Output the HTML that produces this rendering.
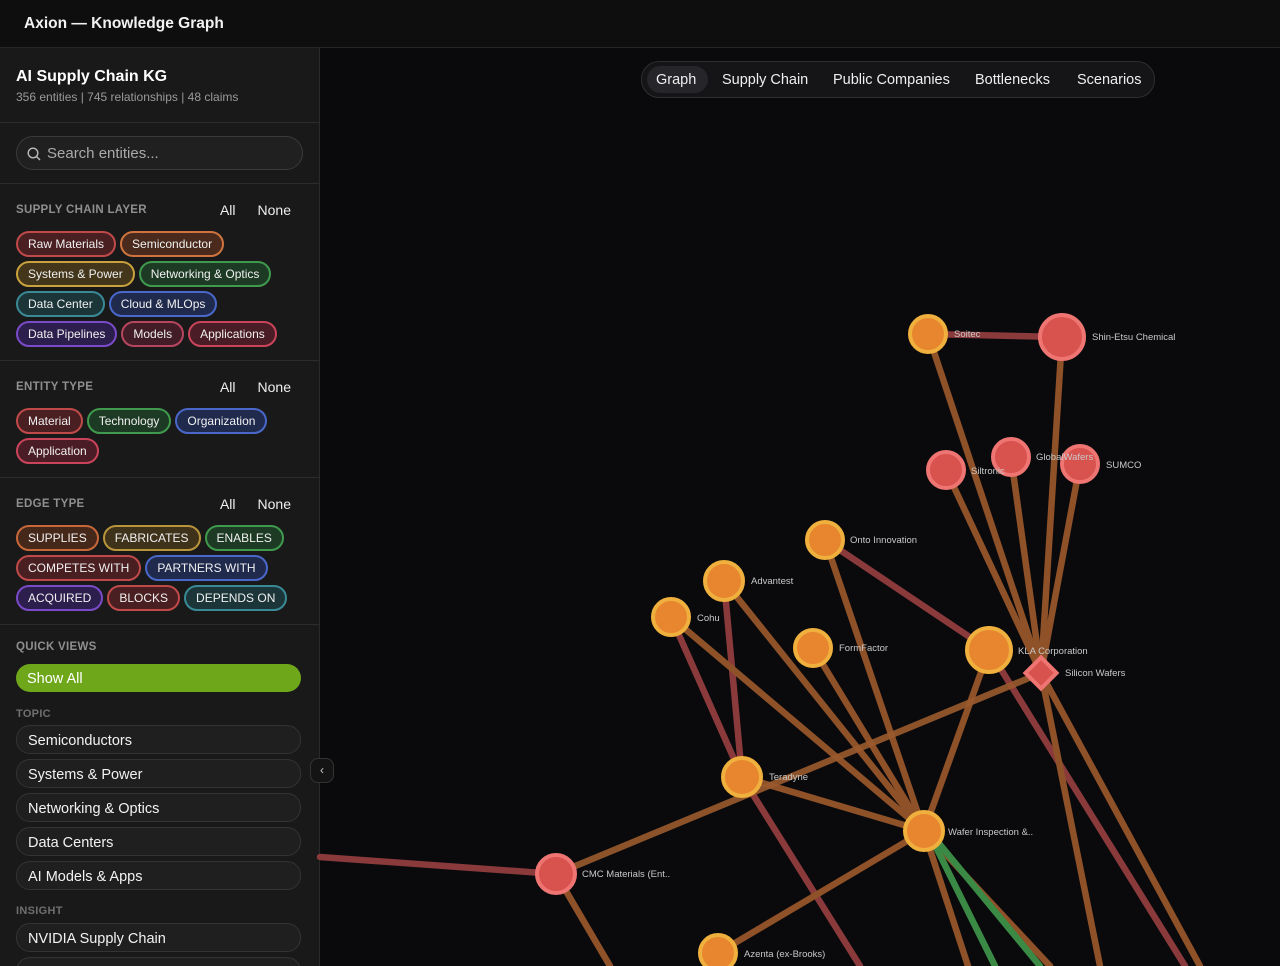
<!DOCTYPE html>
<html><head><meta charset="utf-8"><style>
*{box-sizing:border-box;margin:0;padding:0}
html,body{width:1280px;height:966px;overflow:hidden}
body{background:#0a0a0d;font-family:"Liberation Sans",sans-serif;color:#eee;position:relative}
.hdr{position:absolute;left:0;top:0;width:1280px;height:48px;background:#0e0e0e;border-bottom:1px solid #262626}
.hdr span{position:absolute;left:24px;top:15px;font-size:15.5px;font-weight:bold;color:#f2f2f2}
.side{position:absolute;left:0;top:48px;width:320px;height:918px;background:#191919;border-right:1px solid #2a2a2a;overflow:hidden}
.sec{border-bottom:1px solid #2c2c2c;padding:0 16px;position:relative}
.ttl{font-size:16px;font-weight:bold;color:#fff}
.sub{font-size:12px;color:#9a9a9a;margin-top:4px}
.lbl{font-size:11.5px;font-weight:bold;color:#8f8f8f;letter-spacing:.3px}
.an{position:absolute;right:28px;font-size:14px;color:#eee}
.an b{font-weight:normal;margin-left:22px}
.chips{margin-top:15px;display:flex;flex-wrap:wrap;gap:4px 4px;width:290px}
.c{display:inline-block;height:26px;line-height:22px;padding:0 10px;border-radius:13px;border:2px solid;font-size:12px;color:#f0f0f0}
.search{height:34px;border:1px solid #3a3a3a;border-radius:17px;background:#202020;font-size:15px;color:#aaa;padding:8px 0 0 30px;position:relative}
.btn{height:29px;border:1px solid #333;border-radius:14px;background:#1f1f1f;font-size:14.5px;color:#f2f2f2;padding:7px 0 0 11px;margin-bottom:5px}
.tabs{position:absolute;left:641px;top:61px;width:514px;height:37px;border:1px solid #2e2e2e;border-radius:18px;background:#151517;font-size:14.5px;color:#eee}
.tabs span{position:absolute;top:10px}
</style></head><body>
<div class="hdr"><span>Axion — Knowledge Graph</span></div>
<div class="side">
 <div class="sec" style="height:75px;padding-top:20px"><div class="ttl">AI Supply Chain KG</div><div class="sub">356 entities | 745 relationships | 48 claims</div></div>
 <div class="sec" style="height:61px;padding-top:13px"><div class="search"><svg style="position:absolute;left:10px;top:10px" width="14" height="14" viewBox="0 0 14 14"><circle cx="6" cy="6" r="4.8" fill="none" stroke="#bbb" stroke-width="1.4"/><path d="M9.5 9.5L13 13" stroke="#bbb" stroke-width="1.4"/></svg>Search entities...</div></div>
 <div class="sec" style="height:177px;padding-top:20px"><div class="lbl">SUPPLY CHAIN LAYER</div><div class="an" style="top:18px"><b>All</b><b>None</b></div>
  <div class="chips">
   <span class="c" style="border-color:#c04a4a;background:#4a1f22">Raw Materials</span><span class="c" style="border-color:#d0743f;background:#4a2a1c">Semiconductor</span>
   <span class="c" style="border-color:#c9a23d;background:#43361b">Systems &amp; Power</span><span class="c" style="border-color:#3f9a4e;background:#1d3a24">Networking &amp; Optics</span>
   <span class="c" style="border-color:#3a8a96;background:#1b3539">Data Center</span><span class="c" style="border-color:#4a68c9;background:#1f2a4d">Cloud &amp; MLOps</span>
   <span class="c" style="border-color:#7a4ac9;background:#2d1f4d">Data Pipelines</span><span class="c" style="border-color:#b8455e;background:#421d28">Models</span><span class="c" style="border-color:#c9445a;background:#4a1d26">Applications</span>
  </div></div>
 <div class="sec" style="height:117px;padding-top:20px"><div class="lbl">ENTITY TYPE</div><div class="an" style="top:18px"><b>All</b><b>None</b></div>
  <div class="chips">
   <span class="c" style="border-color:#c04a4a;background:#4a1f22">Material</span><span class="c" style="border-color:#3f9a4e;background:#1d3a24">Technology</span><span class="c" style="border-color:#4a68c9;background:#1f2a4d">Organization</span>
   <span class="c" style="border-color:#c9445a;background:#4a1d26">Application</span>
  </div></div>
 <div class="sec" style="height:147px;padding-top:20px"><div class="lbl">EDGE TYPE</div><div class="an" style="top:18px"><b>All</b><b>None</b></div>
  <div class="chips">
   <span class="c" style="border-color:#c8683a;background:#45281a">SUPPLIES</span><span class="c" style="border-color:#b8953a;background:#3e321a">FABRICATES</span><span class="c" style="border-color:#3f9a4e;background:#1d3a24">ENABLES</span>
   <span class="c" style="border-color:#c04a4a;background:#4a1f22">COMPETES WITH</span><span class="c" style="border-color:#4a68c9;background:#1f2a4d">PARTNERS WITH</span>
   <span class="c" style="border-color:#7a4ac9;background:#2d1f4d">ACQUIRED</span><span class="c" style="border-color:#c04a4a;background:#4a1f22">BLOCKS</span><span class="c" style="border-color:#3a8a96;background:#1b3539">DEPENDS ON</span>
  </div></div>
 <div style="padding:16px 18px 0 16px">
  <div class="lbl">QUICK VIEWS</div>
  <div style="margin-top:11px;height:28px;border-radius:14px;background:#6fa71b;font-size:14.5px;color:#fff;padding:7px 0 0 11px">Show All</div>
  <div class="lbl" style="font-size:11px;color:#6f6f6f;margin-top:16px">TOPIC</div>
  <div style="margin-top:5px">
   <div class="btn">Semiconductors</div><div class="btn">Systems &amp; Power</div><div class="btn">Networking &amp; Optics</div><div class="btn">Data Centers</div><div class="btn">AI Models &amp; Apps</div>
  </div>
  <div class="lbl" style="font-size:11px;color:#6f6f6f;margin-top:15px">INSIGHT</div>
  <div style="margin-top:6px"><div class="btn">NVIDIA Supply Chain</div><div class="btn"></div></div>
 </div>
</div>
<div style="position:absolute;left:310px;top:758px;width:24px;height:25px;border:1px solid #333;border-radius:8px;background:#141414;color:#ccc;font-size:12px;text-align:center;line-height:22px">‹</div>
<svg style="position:absolute;left:0;top:0" width="1280" height="966">
<g stroke-width="6.5" stroke-linecap="round" fill="none">
 <line x1="320" y1="857" x2="556" y2="874" stroke="#8b3a3c"/>
 <line x1="928" y1="334" x2="1062" y2="337" stroke="#8b3a3c"/>
 <line x1="825" y1="540" x2="989" y2="650" stroke="#8b3a3c"/>
 <line x1="724" y1="581" x2="742" y2="777" stroke="#8b3a3c"/>
 <line x1="671" y1="617" x2="742" y2="777" stroke="#8b3a3c"/>
 <line x1="742" y1="777" x2="860" y2="966" stroke="#8b3a3c"/>
 <line x1="989" y1="650" x2="1185" y2="966" stroke="#8b3a3c"/>
 <g stroke="#8f5128">
 <line x1="928" y1="334" x2="1041" y2="673"/>
 <line x1="1062" y1="337" x2="1041" y2="673"/>
 <line x1="946" y1="470" x2="1041" y2="673"/>
 <line x1="1011" y1="457" x2="1041" y2="673"/>
 <line x1="1080" y1="464" x2="1041" y2="673"/>
 <line x1="825" y1="540" x2="924" y2="831"/>
 <line x1="724" y1="581" x2="924" y2="831"/>
 <line x1="671" y1="617" x2="924" y2="831"/>
 <line x1="813" y1="648" x2="924" y2="831"/>
 <line x1="989" y1="650" x2="924" y2="831"/>
 <line x1="742" y1="777" x2="924" y2="831"/>
 <line x1="556" y1="874" x2="1041" y2="673" stroke="#9a5a2c" opacity=".9"/>
 <line x1="924" y1="831" x2="718" y2="953"/>
 <line x1="556" y1="874" x2="610" y2="966"/>
 <line x1="924" y1="831" x2="968" y2="966"/>
 <line x1="924" y1="831" x2="1050" y2="966"/>
 <line x1="1041" y1="673" x2="1100" y2="966"/>
 <line x1="1041" y1="673" x2="1200" y2="966"/>
 </g>
 <line x1="930" y1="835" x2="995" y2="966" stroke="#3a8a45"/>
 <line x1="932" y1="835" x2="1040" y2="966" stroke="#3a8a45"/>
</g>
<g font-family="Liberation Sans,sans-serif" font-size="9.5" fill="#c8c8c8">
 <g fill="#e7862f" stroke="#f0b03e" stroke-width="4">
  <circle cx="928" cy="334" r="18"/><circle cx="825" cy="540" r="18"/><circle cx="724" cy="581" r="19"/><circle cx="671" cy="617" r="18"/>
  <circle cx="813" cy="648" r="18"/><circle cx="989" cy="650" r="22"/><circle cx="742" cy="777" r="19"/><circle cx="924" cy="831" r="19"/><circle cx="718" cy="953" r="18"/>
 </g>
 <g fill="#d8524e" stroke="#ee7572" stroke-width="4">
  <circle cx="1062" cy="337" r="22"/><circle cx="946" cy="470" r="18"/><circle cx="1011" cy="457" r="18"/><circle cx="1080" cy="464" r="18"/><circle cx="556" cy="874" r="19"/>
  <rect x="1030" y="662" width="22" height="22" transform="rotate(45 1041 673)"/>
 </g>
 <text x="954" y="337">Soitec</text><text x="1092" y="340">Shin-Etsu Chemical</text>
 <text x="971" y="474">Siltronic</text><text x="1036" y="460">GlobalWafers</text><text x="1106" y="468">SUMCO</text>
 <text x="850" y="543">Onto Innovation</text><text x="751" y="584">Advantest</text><text x="697" y="621">Cohu</text>
 <text x="839" y="651">FormFactor</text><text x="1018" y="654">KLA Corporation</text><text x="1065" y="676">Silicon Wafers</text>
 <text x="769" y="780">Teradyne</text><text x="948" y="835">Wafer Inspection &amp;..</text><text x="582" y="877">CMC Materials (Ent..</text><text x="744" y="957">Azenta (ex-Brooks)</text>
</g>
</svg>
<div class="tabs">
 <span style="left:5px;top:4px;height:27px;width:61px;border-radius:14px;background:#26262a"></span>
 <span style="left:14px">Graph</span><span style="left:80px">Supply Chain</span><span style="left:191px">Public Companies</span><span style="left:333px">Bottlenecks</span><span style="left:435px">Scenarios</span>
</div>
</body></html>
